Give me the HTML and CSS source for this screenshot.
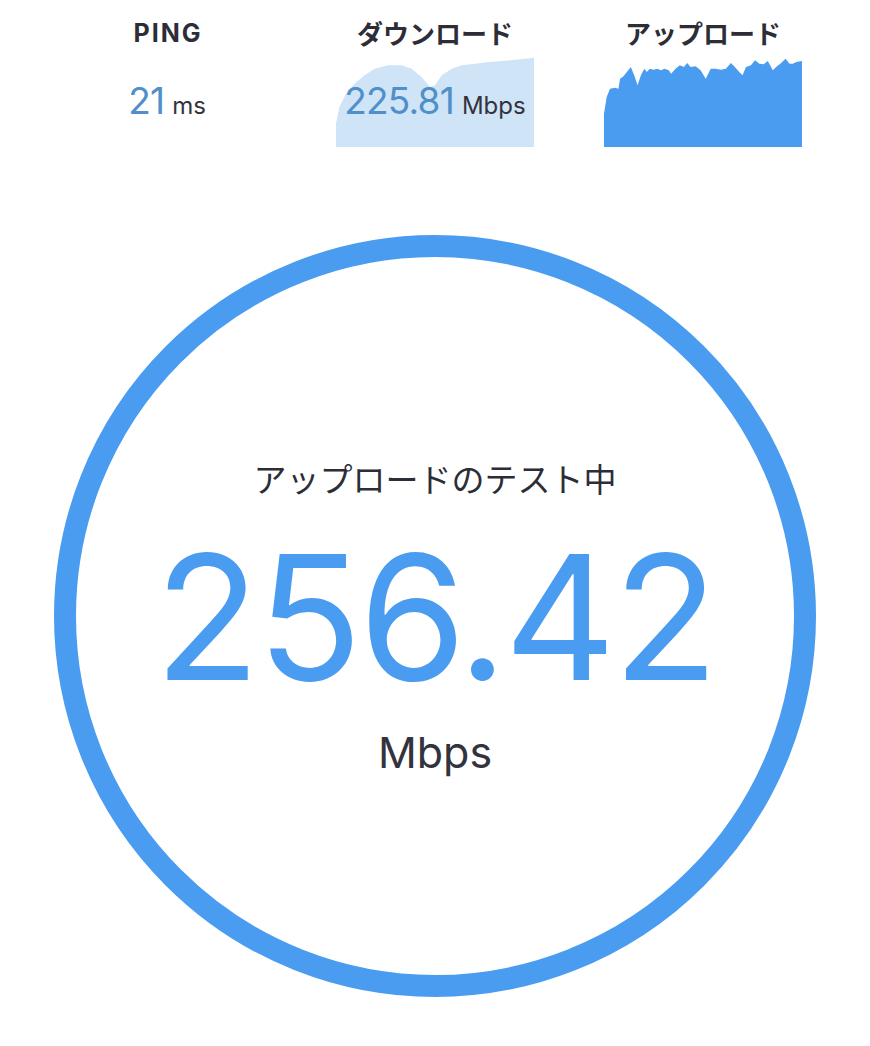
FILE: index.html
```html
<!DOCTYPE html>
<html lang="ja">
<head>
<meta charset="utf-8">
<title>スピードテスト</title>
<link rel="stylesheet" href="styles.css">
</head>
<body>
<div class="stats">
  <div class="stat">
    <div class="label label-latin">PING</div>
    <div class="value-area">
      <div class="value"><span class="num">21</span><span class="unit">ms</span></div>
    </div>
  </div>
  <div class="stat">
    <div class="label">ダウンロード</div>
    <div class="value-area">
      <svg class="chart" viewBox="45 170 590 270" preserveAspectRatio="none" aria-hidden="true">
        <path class="chart-down" d="M45 440 L45 370 L55 320 L75 280 L100 250 L130 225 L160 205 L200 195 L240 195 L270 205 L300 230 L325 260 L340 255 L360 225 L390 205 L420 195 L460 190 L500 185 L540 182 L580 178 L610 175 L635 172 L635 440 Z"/>
      </svg>
      <div class="value"><span class="num">225.81</span><span class="unit">Mbps</span></div>
    </div>
  </div>
  <div class="stat">
    <div class="label">アップロード</div>
    <div class="value-area">
      <svg class="chart" viewBox="42 170 590 270" preserveAspectRatio="none" aria-hidden="true">
        <path class="chart-up" d="M42 440 L42 340 L50 290 L60 265 L75 262 L85 265 L90 235 L100 228 L110 215 L122 200 L132 225 L142 255 L152 225 L162 205 L170 215 L178 205 L190 208 L200 205 L212 210 L222 205 L235 210 L242 220 L255 205 L268 195 L280 200 L290 188 L300 200 L315 198 L330 210 L345 235 L360 205 L375 205 L390 208 L405 205 L420 188 L432 200 L445 215 L455 225 L465 200 L480 195 L492 180 L505 190 L518 192 L530 182 L545 210 L555 200 L570 188 L583 175 L595 190 L605 190 L615 185 L632 182 L632 440 Z"/>
      </svg>
    </div>
  </div>
</div>

<div class="gauge">
  <div class="gauge-status">アップロードのテスト中</div>
  <div class="gauge-value">256.42</div>
  <div class="gauge-unit">Mbps</div>
</div>
</body>
</html>
```

FILE: styles.css
```css
html, body {
  margin: 0;
  padding: 0;
  background: #ffffff;
}

body {
  width: 870px;
  height: 1046px;
  overflow: hidden;
  font-family: "Inter", "Noto Sans CJK JP", sans-serif;
  color: #2d2d37;
}

.stats {
  display: grid;
  grid-template-columns: repeat(3, 1fr);
  padding: 0 33px;
}

.stat {
  display: flex;
  flex-direction: column;
  align-items: center;
}

.label {
  padding-top: 17px;
  height: 32px;
  line-height: 32px;
  font-family: "Noto Sans CJK JP", sans-serif;
  font-size: 26px;
  font-weight: 700;
  color: #2d2d37;
  white-space: nowrap;
}

.label-latin {
  font-family: "Inter", sans-serif;
  font-size: 25px;
  letter-spacing: 2px;
  padding-left: 2px;
}

.value-area {
  display: grid;
  width: 198px;
  height: 90px;
  margin-top: 8px;
}

.value-area > * {
  grid-area: 1 / 1;
}

.chart {
  display: block;
  width: 198px;
  height: 90px;
}

.chart-down {
  fill: #cfe4f7;
}

.chart-up {
  fill: #4a9cf0;
}

.value {
  justify-self: center;
  align-self: start;
  margin-top: 24px;
  white-space: nowrap;
  line-height: 40px;
}

.num {
  font-size: 37px;
  font-weight: 400;
  color: #4f8fca;
  letter-spacing: -0.8px;
}

.unit {
  margin-left: 8px;
  font-size: 24px;
  color: #33333d;
}

.gauge {
  box-sizing: border-box;
  width: 762px;
  height: 762px;
  margin: 88px auto 0;
  border: 22px solid #4a9cf0;
  border-radius: 50%;
  display: flex;
  flex-direction: column;
  align-items: center;
  padding-top: 201px;
}

.gauge-status {
  font-family: "Noto Sans CJK JP", sans-serif;
  font-size: 33px;
  line-height: 40px;
  height: 40px;
  color: #2d2d37;
  white-space: nowrap;
}

.gauge-value {
  margin-top: 33px;
  font-size: 173px;
  line-height: 173px;
  height: 173px;
  color: #4a9cf0;
  letter-spacing: -3px;
}

.gauge-unit {
  margin-top: 27px;
  font-size: 43px;
  line-height: 43px;
  color: #33333d;
}
```
